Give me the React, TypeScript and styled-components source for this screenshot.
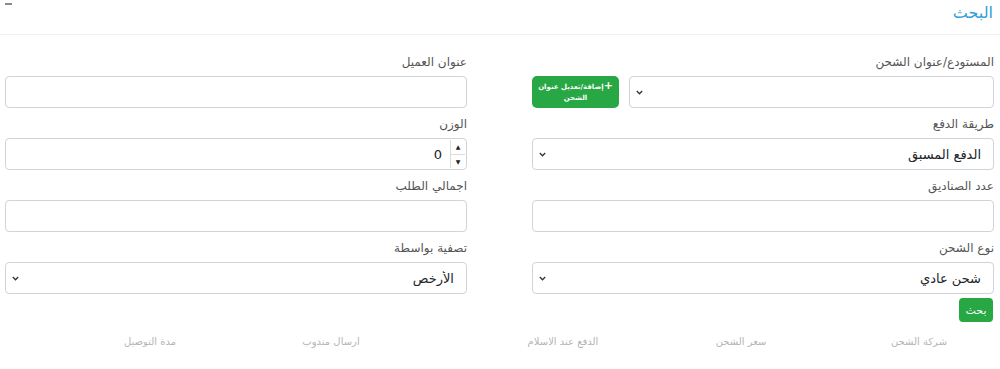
import styled, { createGlobalStyle } from "styled-components";

const GlobalStyle = createGlobalStyle`
  body {
    margin: 0;
    background: #fff;
    font-family: "DejaVu Sans", "Noto Sans", sans-serif;
  }
`;

const Page = styled.div`
  direction: rtl;
  width: 1000px;
  height: 369px;
  overflow: hidden;
`;

const Header = styled.div`
  display: flex;
  justify-content: space-between;
  align-items: flex-start;
  height: 35px;
  padding: 0 7px 0 5px;
  border-bottom: 1px solid #f0f0f0;
  box-sizing: border-box;
`;

const Title = styled.h3`
  margin: 3px 0 0;
  font-size: 16px;
  font-weight: 400;
  line-height: 20px;
  color: #2e9fd8;
`;

const Collapse = styled.span`
  display: block;
  width: 7px;
  height: 2px;
  margin-top: 3px;
  background: #8a8a8a;
`;

const Form = styled.div`
  display: grid;
  grid-template-columns: 1fr 1fr;
  column-gap: 65px;
  padding: 17px 6px 0 5px;
`;

const Group = styled.div`
  margin-bottom: 6px;
`;

const Label = styled.label`
  display: block;
  font-size: 12px;
  line-height: 20px;
  margin-bottom: 4px;
  color: #555;
`;

const FieldRow = styled.div`
  display: flex;
  gap: 10px;
`;

const Input = styled.input`
  display: block;
  width: 100%;
  height: 32px;
  box-sizing: border-box;
  border: 1px solid #ced4da;
  border-radius: 4px;
  padding: 0 12px;
  font-family: inherit;
  font-size: 13px;
  color: #212529;
  background: #fff;
`;

const SelectWrap = styled.div`
  position: relative;
  flex: 1;
`;

const Select = styled.select`
  display: block;
  width: 100%;
  height: 32px;
  box-sizing: border-box;
  appearance: none;
  border: 1px solid #ced4da;
  border-radius: 4px;
  padding: 0 12px 0 24px;
  font-family: inherit;
  font-size: 13px;
  color: #212529;
  background: #fff;
`;

const Chevron = styled.svg`
  position: absolute;
  left: 7px;
  top: 14px;
  width: 7px;
  height: 5px;
  pointer-events: none;
`;

const AddButton = styled.button`
  flex: 0 0 87px;
  height: 32px;
  border: none;
  border-radius: 5px;
  background: #28a745;
  color: #fff;
  font-family: inherit;
  font-size: 7px;
  font-weight: 700;
  line-height: 11px;
  padding: 0 2px;
  text-align: center;
  white-space: nowrap;
`;

const Plus = styled.span`
  font-size: 11px;
  line-height: 10px;
  font-weight: 700;
`;

const NumberBox = styled.div`
  direction: ltr;
  display: flex;
  height: 32px;
  box-sizing: border-box;
  border: 1px solid #ced4da;
  border-radius: 4px;
  background: #fff;
`;

const NumberInput = styled.input`
  flex: 1;
  min-width: 0;
  border: none;
  outline: none;
  background: transparent;
  text-align: right;
  padding: 0 8px;
  font-family: inherit;
  font-size: 13px;
  color: #212529;
  &::-webkit-inner-spin-button,
  &::-webkit-outer-spin-button {
    -webkit-appearance: none;
    margin: 0;
  }
`;

const Spinner = styled.div`
  display: flex;
  flex-direction: column;
  width: 14px;
  margin: 1px 1px 1px 0;
  border-left: 1px solid #dcdcdc;
`;

const SpinHalf = styled.span<{ $top?: boolean }>`
  flex: 1;
  display: flex;
  align-items: center;
  justify-content: center;
  font-size: 6px;
  color: #222;
  border-bottom: ${(p) => (p.$top ? "1px solid #dcdcdc" : "none")};
`;

const Actions = styled.div`
  display: flex;
  padding: 0 7px;
  margin-top: -2px;
`;

const SearchButton = styled.button`
  height: 24px;
  width: 34px;
  border: none;
  border-radius: 4px;
  background: #28a745;
  color: #fff;
  font-family: inherit;
  font-size: 11px;
  padding: 0;
`;

const ResultsHead = styled.div`
  display: grid;
  grid-template-columns: 162px 194px 162px 302px 60px;
  padding-top: 12px;
`;

const HeadCell = styled.span`
  justify-self: center;
  white-space: nowrap;
  font-size: 10px;
  line-height: 16px;
  color: #b5b5b5;
`;

const columns = ["شركة الشحن", "سعر الشحن", "الدفع عند الاسلام", "ارسال مندوب", "مدة التوصيل"];

type Opt = { value: string; label: string };

const Dropdown = ({ options, value }: { options: Opt[]; value: string }) => (
  <SelectWrap>
    <Select dir="rtl" defaultValue={value}>
      {options.map((o) => (
        <option key={o.value} value={o.value}>
          {o.label}
        </option>
      ))}
    </Select>
    <Chevron viewBox="0 0 7 5">
      <path d="M0.8 1 L3.5 3.8 L6.2 1" fill="none" stroke="#333" strokeWidth="1.3" />
    </Chevron>
  </SelectWrap>
);

export default function App() {
  return (
    <Page>
      <GlobalStyle />
      <Header>
        <Title>البحث</Title>
        <Collapse />
      </Header>
      <Form>
        <Group>
          <Label>المستودع/عنوان الشحن</Label>
          <FieldRow>
            <Dropdown options={[{ value: "", label: "" }]} value="" />
            <AddButton>
              <Plus>+</Plus>إضافة/تعديل عنوان
              <br />
              الشحن
            </AddButton>
          </FieldRow>
        </Group>
        <Group>
          <Label>عنوان العميل</Label>
          <Input type="text" />
        </Group>

        <Group>
          <Label>طريقة الدفع</Label>
          <Dropdown
            options={[
              { value: "prepaid", label: "الدفع المسبق" },
              { value: "cod", label: "الدفع عند الاستلام" },
            ]}
            value="prepaid"
          />
        </Group>
        <Group>
          <Label>الوزن</Label>
          <NumberBox>
            <NumberInput type="number" defaultValue={0} />
            <Spinner>
              <SpinHalf $top>▲</SpinHalf>
              <SpinHalf>▼</SpinHalf>
            </Spinner>
          </NumberBox>
        </Group>

        <Group>
          <Label>عدد الصناديق</Label>
          <Input type="text" />
        </Group>
        <Group>
          <Label>اجمالي الطلب</Label>
          <Input type="text" />
        </Group>

        <Group>
          <Label>نوع الشحن</Label>
          <Dropdown
            options={[
              { value: "normal", label: "شحن عادي" },
              { value: "fast", label: "شحن سريع" },
            ]}
            value="normal"
          />
        </Group>
        <Group>
          <Label>تصفية بواسطة</Label>
          <Dropdown
            options={[
              { value: "cheap", label: "الأرخص" },
              { value: "fast", label: "الأسرع" },
            ]}
            value="cheap"
          />
        </Group>
      </Form>
      <Actions>
        <SearchButton>بحث</SearchButton>
      </Actions>
      <ResultsHead>
        {columns.map((c) => (
          <HeadCell key={c}>{c}</HeadCell>
        ))}
      </ResultsHead>
    </Page>
  );
}
